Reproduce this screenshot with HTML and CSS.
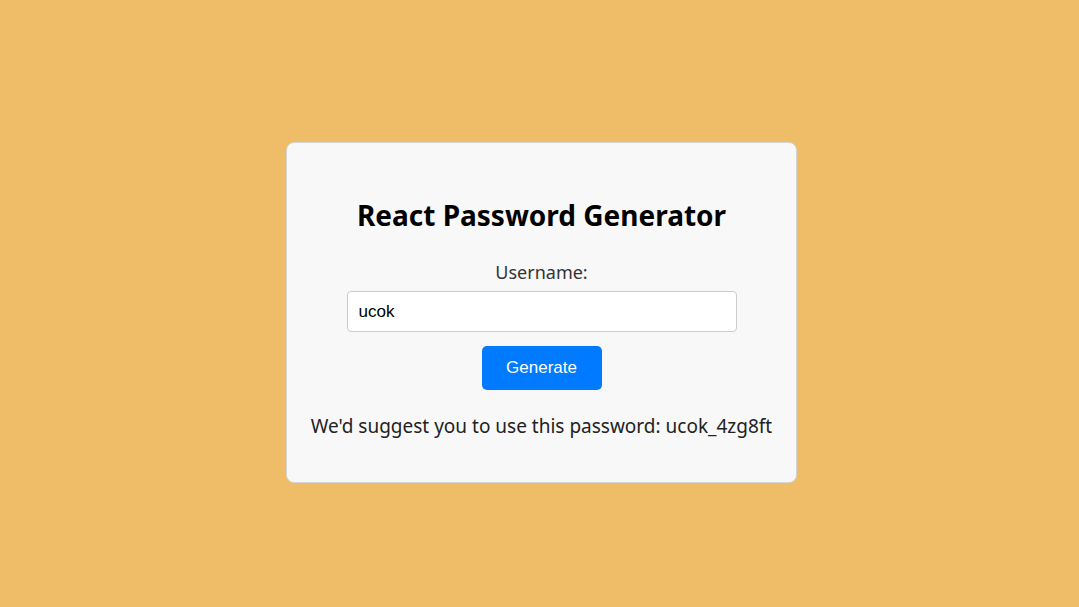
FILE: index.html
```html
<!DOCTYPE html>
<html lang="en">
<head>
<meta charset="utf-8">
<title>React Password Generator</title>
<link rel="stylesheet" href="styles.css">
</head>
<body>
<main class="page">
  <section class="card">
    <h1 class="title">React Password Generator</h1>
    <label class="label" for="username">Username:</label>
    <input class="input" id="username" type="text" value="ucok">
    <button class="button" type="button">Generate</button>
    <p class="result">We'd suggest you to use this password: ucok_4zg8ft</p>
  </section>
</main>
</body>
</html>
```
FILE: styles.css
```css
html, body {
  margin: 0;
  padding: 0;
}
body {
  background: #efbd68;
  font-family: "Noto Sans", "Open Sans", sans-serif;
  color: #222;
}
.page {
  min-height: 607px;
  box-sizing: border-box;
  display: flex;
  justify-content: center;
  align-items: flex-start;
  padding-top: 142px;
  padding-left: 4px;
}
.card {
  width: 511px;
  height: 341px;
  box-sizing: border-box;
  background: #f8f8f8;
  border: 1px solid #d4d4d4;
  border-radius: 8px;
  display: flex;
  flex-direction: column;
  align-items: center;
  padding-top: 52px;
}
.title {
  margin: 0;
  font-size: 28px;
  font-weight: 700;
  line-height: 40px;
  color: #000;
}
.label {
  margin-top: 24px;
  font-size: 18px;
  line-height: 26px;
  color: #333;
}
.input {
  margin-top: 6px;
  width: 390px;
  height: 41px;
  box-sizing: border-box;
  border: 1px solid #ccc;
  border-radius: 4px;
  background: #fff;
  padding: 0 11px;
  font-family: "Liberation Sans", Arial, sans-serif;
  font-size: 17px;
  color: #000;
  outline: none;
}
.button {
  margin-top: 14px;
  width: 120px;
  height: 44px;
  border: none;
  border-radius: 5px;
  background: #007bff;
  color: #fff;
  font-family: "Liberation Sans", Arial, sans-serif;
  font-size: 17px;
}
.result {
  margin: 22px 0 0;
  font-size: 19px;
  line-height: 28px;
  color: #222;
}
```
